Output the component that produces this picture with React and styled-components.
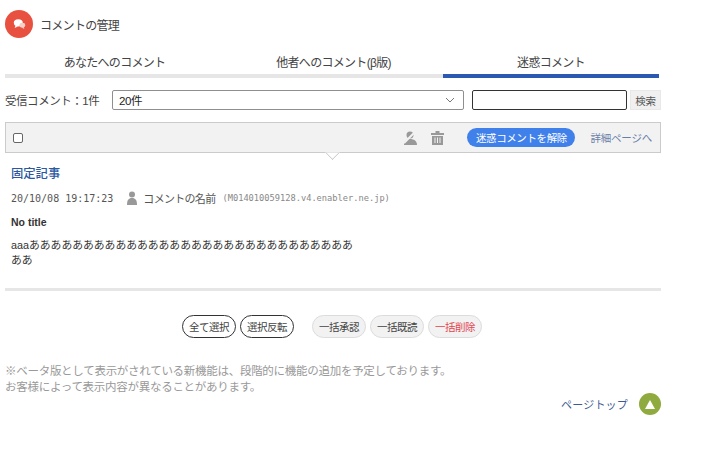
import React from "react";
import styled, { createGlobalStyle } from "styled-components";

const GlobalStyle = createGlobalStyle`
  html, body {
    margin: 0;
    padding: 0;
    background: #fff;
    font-family: "Liberation Sans", "Noto Sans CJK JP", sans-serif;
    color: #333;
  }
`;

const Page = styled.div`
  width: 656px;
  padding: 10px 0 0 5px;
`;

const Header = styled.div`
  display: flex;
  align-items: center;
  gap: 7px;
  height: 28px;
`;

const HeaderIcon = styled.div`
  width: 28px;
  height: 28px;
  border-radius: 50%;
  background: #e8503f;
  display: flex;
  align-items: center;
  justify-content: center;
`;

const HeaderTitle = styled.h1`
  margin: 0;
  font-size: 12px;
  font-weight: 400;
  letter-spacing: -0.7px;
  color: #444;
`;

const Tabs = styled.div`
  display: grid;
  grid-template-columns: 219px 219px 216px;
  width: 654px;
  margin-top: 15px;
`;

const Tab = styled.div`
  height: 21px;
  border-bottom: 4px solid ${(p) => (p.$active ? "#2b58b0" : "#e6e6e6")};
  text-align: center;
  font-size: 12px;
  line-height: 20px;
  letter-spacing: -0.7px;
  color: #444;
`;

const FilterRow = styled.div`
  display: flex;
  align-items: center;
  margin-top: 12px;
  height: 20px;
`;

const Count = styled.div`
  width: 107px;
  font-size: 11.5px;
  letter-spacing: -0.45px;
  color: #444;
`;

const Select = styled.div`
  box-sizing: border-box;
  width: 352px;
  height: 20px;
  border: 1px solid #8f8f8f;
  border-radius: 2px;
  padding: 0 8px 0 6px;
  display: flex;
  align-items: center;
  justify-content: space-between;
  font-size: 11.5px;
  letter-spacing: -0.4px;
  color: #222;
`;

const SearchInput = styled.input`
  box-sizing: border-box;
  width: 155px;
  height: 20px;
  margin-left: 8px;
  border: 1px solid #333;
  border-radius: 2px;
  padding: 0;
  background: #fff;
`;

const SearchButton = styled.button`
  box-sizing: border-box;
  width: 31px;
  height: 20px;
  margin-left: 3px;
  padding: 0;
  border: 1px solid #e8e8e8;
  background: #f0f0f0;
  font: inherit;
  font-size: 10.5px;
  letter-spacing: -0.2px;
  color: #555;
`;

const Toolbar = styled.div`
  position: relative;
  box-sizing: border-box;
  display: flex;
  align-items: center;
  height: 31px;
  margin-top: 12px;
  padding: 0 7px;
  background: #f2f2f2;
  border: 1px solid #cbcbcb;

  &::after {
    content: "";
    position: absolute;
    left: 320.5px;
    bottom: -6px;
    box-sizing: border-box;
    width: 11px;
    height: 11px;
    background: #fff;
    border-right: 1px solid #cbcbcb;
    border-bottom: 1px solid #cbcbcb;
    clip-path: polygon(100% 0, 100% 100%, 0 100%);
    transform: rotate(45deg);
  }
`;

const CheckBox = styled.span`
  box-sizing: border-box;
  width: 10px;
  height: 10px;
  border: 1px solid #666;
  border-radius: 2px;
  background: #fff;
`;

const ToolIcons = styled.div`
  display: flex;
  align-items: center;
  gap: 14px;
  margin-left: auto;
`;

const PrimaryPill = styled.button`
  width: 108px;
  height: 19px;
  margin-left: 23px;
  padding: 0;
  border: none;
  border-radius: 10px;
  background: #4080ea;
  color: #fff;
  font: inherit;
  font-size: 10.5px;
  letter-spacing: -0.4px;
`;

const DetailLink = styled.a`
  margin-left: 15px;
  margin-right: 1px;
  font-size: 10.5px;
  letter-spacing: -0.2px;
  color: #6a7fa8;
`;

const Entry = styled.div`
  padding: 12px 0 0 6px;
  border-bottom: 3px solid #e6e6e6;
  height: 123px;
`;

const EntryTitle = styled.a`
  display: block;
  font-size: 12.3px;
  line-height: 18px;
  color: #2b58a0;
  font-weight: 500;
`;

const Meta = styled.div`
  display: flex;
  align-items: center;
  margin-top: 7px;
  height: 16px;
  color: #555;
`;

const Mono = styled.span`
  font-family: "DejaVu Sans Mono", "Liberation Mono", monospace;
  font-size: ${(p) => p.$size}px;
  color: ${(p) => p.$color};
`;

const Author = styled.span`
  margin: 0 7px 0 5px;
  font-size: 11px;
  letter-spacing: -0.7px;
  color: #555;
`;

const PersonIcon = styled.svg`
  margin-left: 13px;
`;

const NoTitle = styled.div`
  margin-top: 9px;
  font-size: 10.5px;
  line-height: 14px;
  font-weight: 700;
  color: #333;
`;

const Body = styled.div`
  margin-top: 9px;
  width: 350px;
  font-size: 10.8px;
  line-height: 15px;
  color: #333;
  word-break: break-all;
`;

const BulkRow = styled.div`
  display: flex;
  gap: 4px;
  margin: 24px 0 0 177px;
`;

const BulkButton = styled.button`
  box-sizing: border-box;
  width: 54px;
  height: 23px;
  margin-left: ${(p) => p.$gap || 0}px;
  padding: 0;
  border-radius: 12px;
  border: 1px solid ${(p) => (p.$outlined ? "#333" : "#dcdcdc")};
  background: ${(p) => (p.$outlined ? "#fff" : "#f2f2f2")};
  color: ${(p) => p.$color || "#444"};
  font: inherit;
  font-size: 10.5px;
  letter-spacing: -0.5px;
`;

const Notice = styled.p`
  margin: 25px 0 0;
  font-size: 11.5px;
  line-height: 16px;
  letter-spacing: -0.28px;
  color: #999;
`;

const PageTop = styled.div`
  display: flex;
  align-items: center;
  justify-content: flex-end;
  gap: 11px;
  margin-top: -2px;
`;

const PageTopLabel = styled.a`
  font-size: 11px;
  letter-spacing: 0.2px;
  color: #3e5a92;
`;

const PageTopButton = styled.div`
  width: 22px;
  height: 22px;
  border-radius: 50%;
  background: #8fab3f;
  display: flex;
  align-items: center;
  justify-content: center;
`;

export default function App() {
  return (
    <>
      <GlobalStyle />
      <Page>
        <Header>
          <HeaderIcon>
            <svg width="13" height="12" viewBox="0 0 16 14">
              <ellipse cx="6.5" cy="5.5" rx="5.5" ry="4.5" fill="#fff" />
              <path d="M3 9l-1 3 4-2z" fill="#fff" />
              <ellipse cx="11.5" cy="8.5" rx="3.5" ry="3" fill="#f7cfc9" />
              <path d="M13 10.5l1 2.5-3-1.5z" fill="#f7cfc9" />
            </svg>
          </HeaderIcon>
          <HeaderTitle>コメントの管理</HeaderTitle>
        </Header>

        <Tabs>
          <Tab>あなたへのコメント</Tab>
          <Tab>他者へのコメント(β版)</Tab>
          <Tab $active>迷惑コメント</Tab>
        </Tabs>

        <FilterRow>
          <Count>受信コメント：1件</Count>
          <Select>
            20件
            <svg width="10" height="6" viewBox="0 0 10 6">
              <path d="M1 1l4 4 4-4" fill="none" stroke="#777" />
            </svg>
          </Select>
          <SearchInput />
          <SearchButton>検索</SearchButton>
        </FilterRow>

        <Toolbar>
          <CheckBox />
          <ToolIcons>
            <svg width="13" height="14" viewBox="0 0 13 14">
              <circle cx="6" cy="4" r="3.5" fill="#999" />
              <path d="M0 14c0-4 2-6 6-6s7 2 7 6z" fill="#999" />
              <path d="M0 12L11 1" stroke="#f2f2f2" strokeWidth="2" />
            </svg>
            <svg width="13" height="14" viewBox="0 0 13 14">
              <path d="M0 2h13v2H0zM4.5 0h4v2h-4z" fill="#999" />
              <path d="M1 5h11v9H1z" fill="#999" />
              <path d="M4 6.5v5.5M6.5 6.5v5.5M9 6.5v5.5" stroke="#f2f2f2" />
            </svg>
          </ToolIcons>
          <PrimaryPill>迷惑コメントを解除</PrimaryPill>
          <DetailLink>詳細ページへ</DetailLink>
        </Toolbar>

        <Entry>
          <EntryTitle>固定記事</EntryTitle>
          <Meta>
            <Mono $size={10} $color="#555">20/10/08 19:17:23</Mono>
            <PersonIcon width="12" height="14" viewBox="0 0 12 14">
              <circle cx="6" cy="3.5" r="3" fill="#999" />
              <path d="M1 14c0-5 1.5-7 5-7s5 2 5 7z" fill="#999" />
            </PersonIcon>
            <Author>コメントの名前</Author>
            <Mono $size={8.7} $color="#888">(M014010059128.v4.enabler.ne.jp)</Mono>
          </Meta>
          <NoTitle>No title</NoTitle>
          <Body>aaaああああああああああああああああああああああああああああああああ</Body>
        </Entry>

        <BulkRow>
          <BulkButton $outlined>全て選択</BulkButton>
          <BulkButton $outlined>選択反転</BulkButton>
          <BulkButton $gap={14}>一括承認</BulkButton>
          <BulkButton>一括既読</BulkButton>
          <BulkButton $color="#e2434f">一括削除</BulkButton>
        </BulkRow>

        <Notice>
          ※ベータ版として表示がされている新機能は、段階的に機能の追加を予定しております。
          <br />
          お客様によって表示内容が異なることがあります。
        </Notice>

        <PageTop>
          <PageTopLabel>ページトップ</PageTopLabel>
          <PageTopButton>
            <svg width="10" height="9" viewBox="0 0 10 9">
              <path d="M5 0l5 9H0z" fill="#fff" />
            </svg>
          </PageTopButton>
        </PageTop>
      </Page>
    </>
  );
}
